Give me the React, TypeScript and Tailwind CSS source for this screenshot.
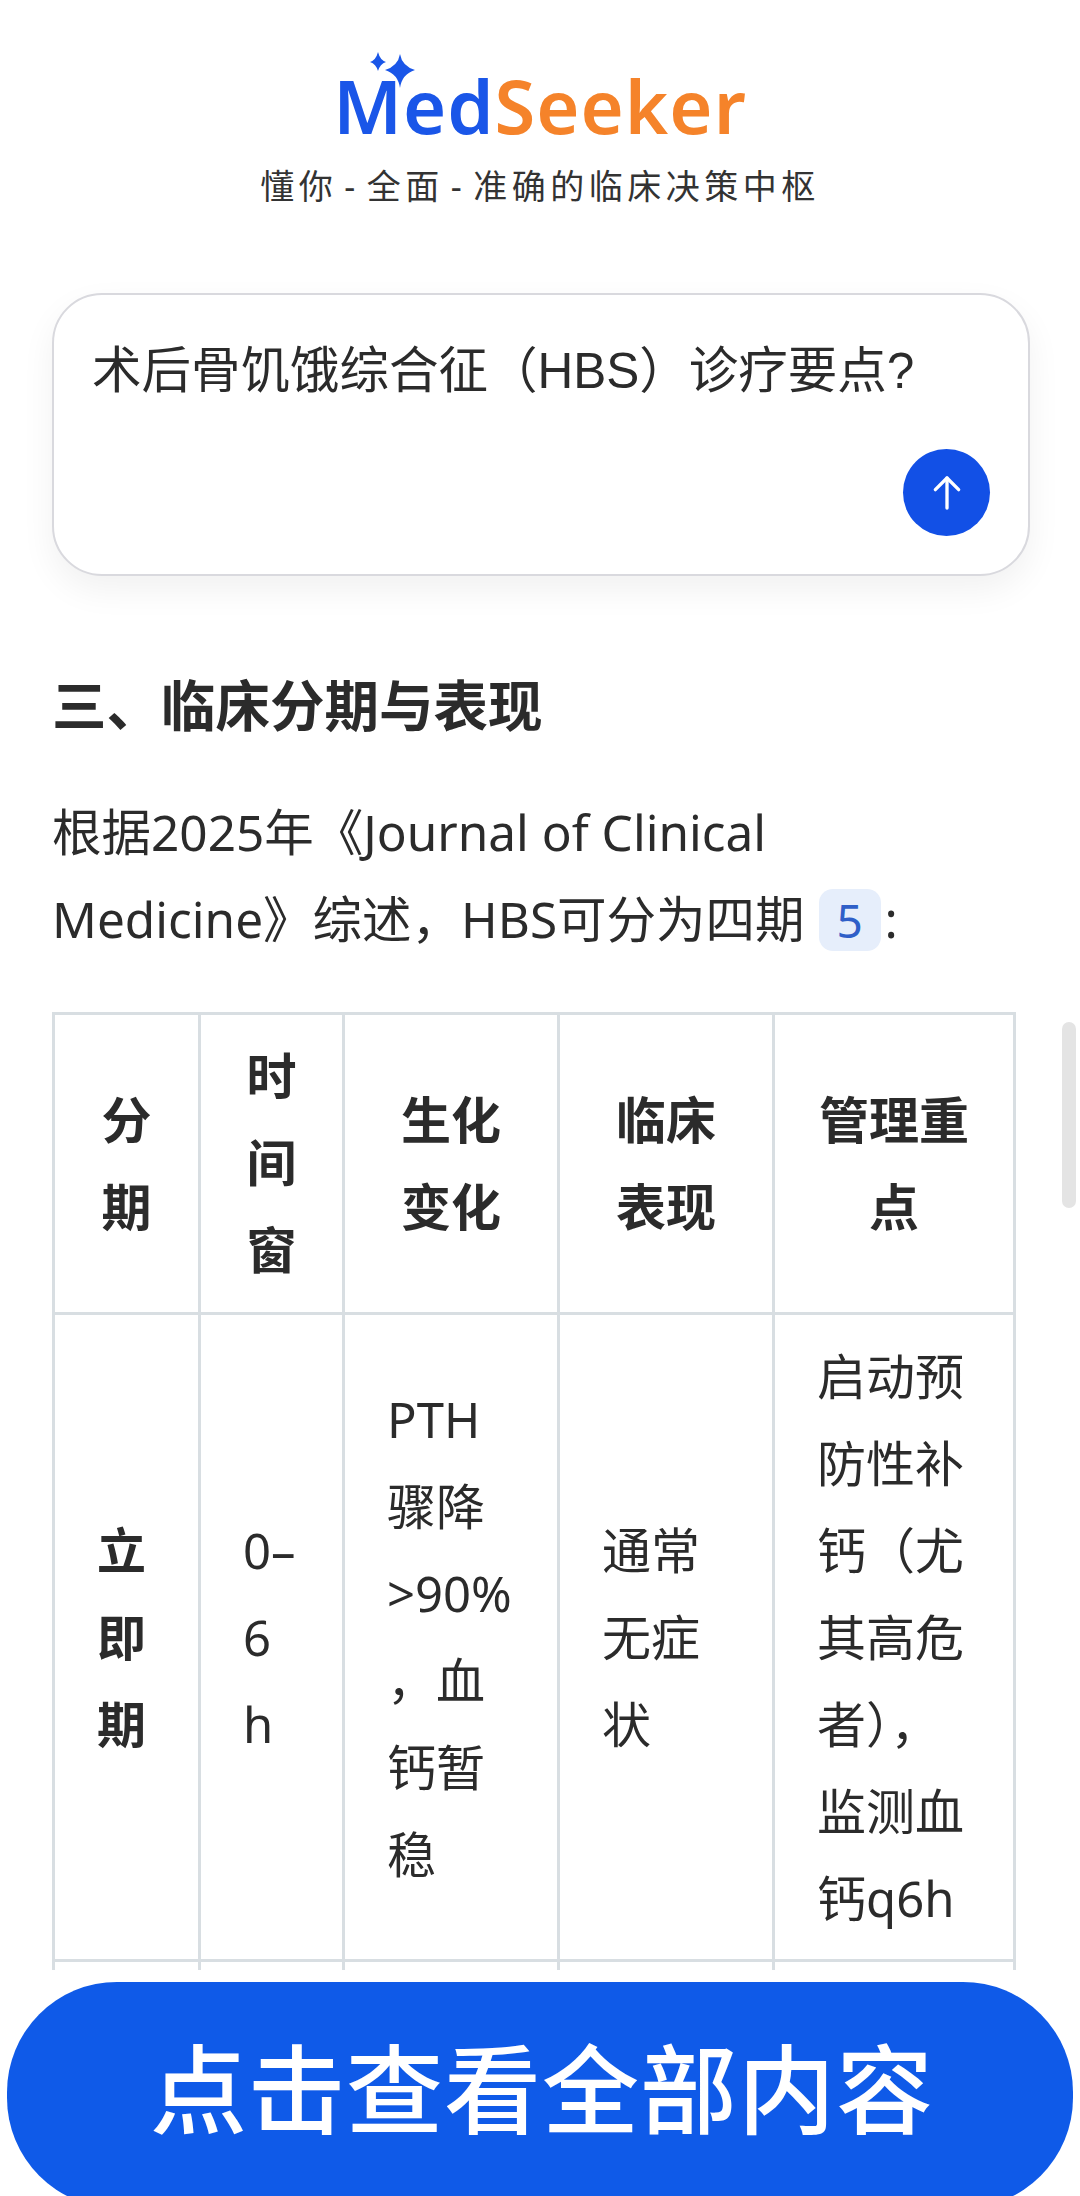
import React from 'react';

const Cell: React.FC<{ children: React.ReactNode; bold?: boolean }> = ({ children, bold }) => (
  <td className={`border-[3px] border-[#d8dee2] pl-[42px] pr-[6px] align-middle ${bold ? 'font-bold' : ''}`}>
    {children}
  </td>
);

const Head: React.FC<{ children: React.ReactNode }> = ({ children }) => (
  <th className="border-[3px] border-[#d8dee2] px-0 align-middle text-center text-[50px] font-bold">{children}</th>
);

const Dash = () => <span className="px-[7px]">-</span>;

const App: React.FC = () => {
  return (
    <div className="relative h-[2196px] w-[1080px] overflow-hidden bg-white text-[#2b2b2b] font-['Noto_Sans','Noto_Sans_CJK_SC',sans-serif]">
      <header className="flex flex-col items-center pt-[72px]">
        <div className="relative flex h-[68px] items-center text-[74px] font-semibold leading-none tracking-[1px]">
          <svg className="absolute left-[35px] top-[-20px]" width="50" height="40" viewBox="0 0 50 40" fill="#1a56e8">
            <path d="M10 0 Q12 8 18 10 Q12 12 10 19 Q8 12 2 10 Q8 8 10 0Z" />
            <path d="M32 2 Q34 14 47 18 Q34 22 32 36 Q30 22 17 18 Q30 14 32 2Z" />
          </svg>
          <span className="text-[#1a56e8]">Med</span>
          <span className="text-[#f5832a]">Seeker</span>
        </div>
        <p className="mt-[24px] text-[34px] leading-[44px] tracking-[4.5px] text-[#333]">
          懂你<Dash />全面<Dash />准确的临床决策中枢
        </p>
      </header>

      <section className="ml-[52px] mr-[50px] mt-[85px] flex h-[283px] flex-col justify-between rounded-[50px] border-[2px] border-[#d9d9de] bg-white pb-[38px] pl-[38px] pr-[38px] pt-[40px] shadow-[0_14px_34px_rgba(0,0,0,0.06)]">
        <p className="font-['Liberation_Sans','Noto_Sans_CJK_SC',sans-serif] text-[49.5px] leading-[72px]">术后骨饥饿综合征（HBS）诊疗要点?</p>
        <div className="flex justify-end">
          <button className="flex h-[87px] w-[87px] items-center justify-center rounded-full bg-[#1250e6] text-white">
            <svg width="40" height="40" viewBox="0 0 24 24" fill="none" stroke="currentColor" strokeWidth="2" strokeLinecap="round" strokeLinejoin="round">
              <path d="M12 21V3" />
              <path d="M5 10l7-7 7 7" />
            </svg>
          </button>
        </div>
      </section>

      <main className="px-[52px] pt-[97px]">
        <h2 className="text-[54.5px] font-bold leading-[64px]">三、临床分期与表现</h2>
        <p className="mt-[52px] text-[49.5px] leading-[87px]">
          根据2025年《Journal of Clinical
          <br />
          Medicine》综述，HBS可分为四期
          <span className="ml-[14px] mr-[4px] inline-block h-[62px] w-[62px] -translate-y-[5px] rounded-[14px] bg-[#e6eefb] text-center align-middle text-[46px] leading-[62px] text-[#2f5fc8]">5</span>
          :
        </p>

        <table className="mt-[49px] w-[961px] table-fixed border-collapse text-[49px] leading-[87px]">
          <colgroup>
            <col className="w-[146px]" />
            <col className="w-[144px]" />
            <col className="w-[215px]" />
            <col className="w-[215px]" />
            <col className="w-[241px]" />
          </colgroup>
          <thead>
            <tr className="h-[300px]">
              <Head>分<br />期</Head>
              <Head>时<br />间<br />窗</Head>
              <Head>生化<br />变化</Head>
              <Head>临床<br />表现</Head>
              <Head>管理重<br />点</Head>
            </tr>
          </thead>
          <tbody>
            <tr className="h-[647px]">
              <Cell bold>立<br />即<br />期</Cell>
              <Cell>0–<br />6<br />h</Cell>
              <Cell>PTH<br />骤降<br />&gt;90%<br />，血<br />钙暂<br />稳</Cell>
              <Cell>通常<br />无症<br />状</Cell>
              <Cell>启动预<br />防性补<br />钙（尤<br />其高危<br />者），<br />监测血<br />钙q6h</Cell>
            </tr>
            <tr className="h-[100px]">
              <Cell>&nbsp;</Cell>
              <Cell>&nbsp;</Cell>
              <Cell>&nbsp;</Cell>
              <Cell>&nbsp;</Cell>
              <Cell>&nbsp;</Cell>
            </tr>
          </tbody>
        </table>
      </main>

      <div className="absolute left-[1062px] top-[1022px] h-[186px] w-[14px] rounded-full bg-[#e4e4e4]" />

      <div className="absolute inset-x-0 bottom-0 top-[1970px] bg-white">
        <button className="absolute left-[7px] top-[12px] flex h-[226px] w-[1066px] items-center justify-center rounded-[110px] bg-[#0f5ae8] pb-[14px] pl-[4px] text-[97px] font-medium leading-none tracking-[1px] text-white">
          点击查看全部内容
        </button>
      </div>
    </div>
  );
};

export default App;
